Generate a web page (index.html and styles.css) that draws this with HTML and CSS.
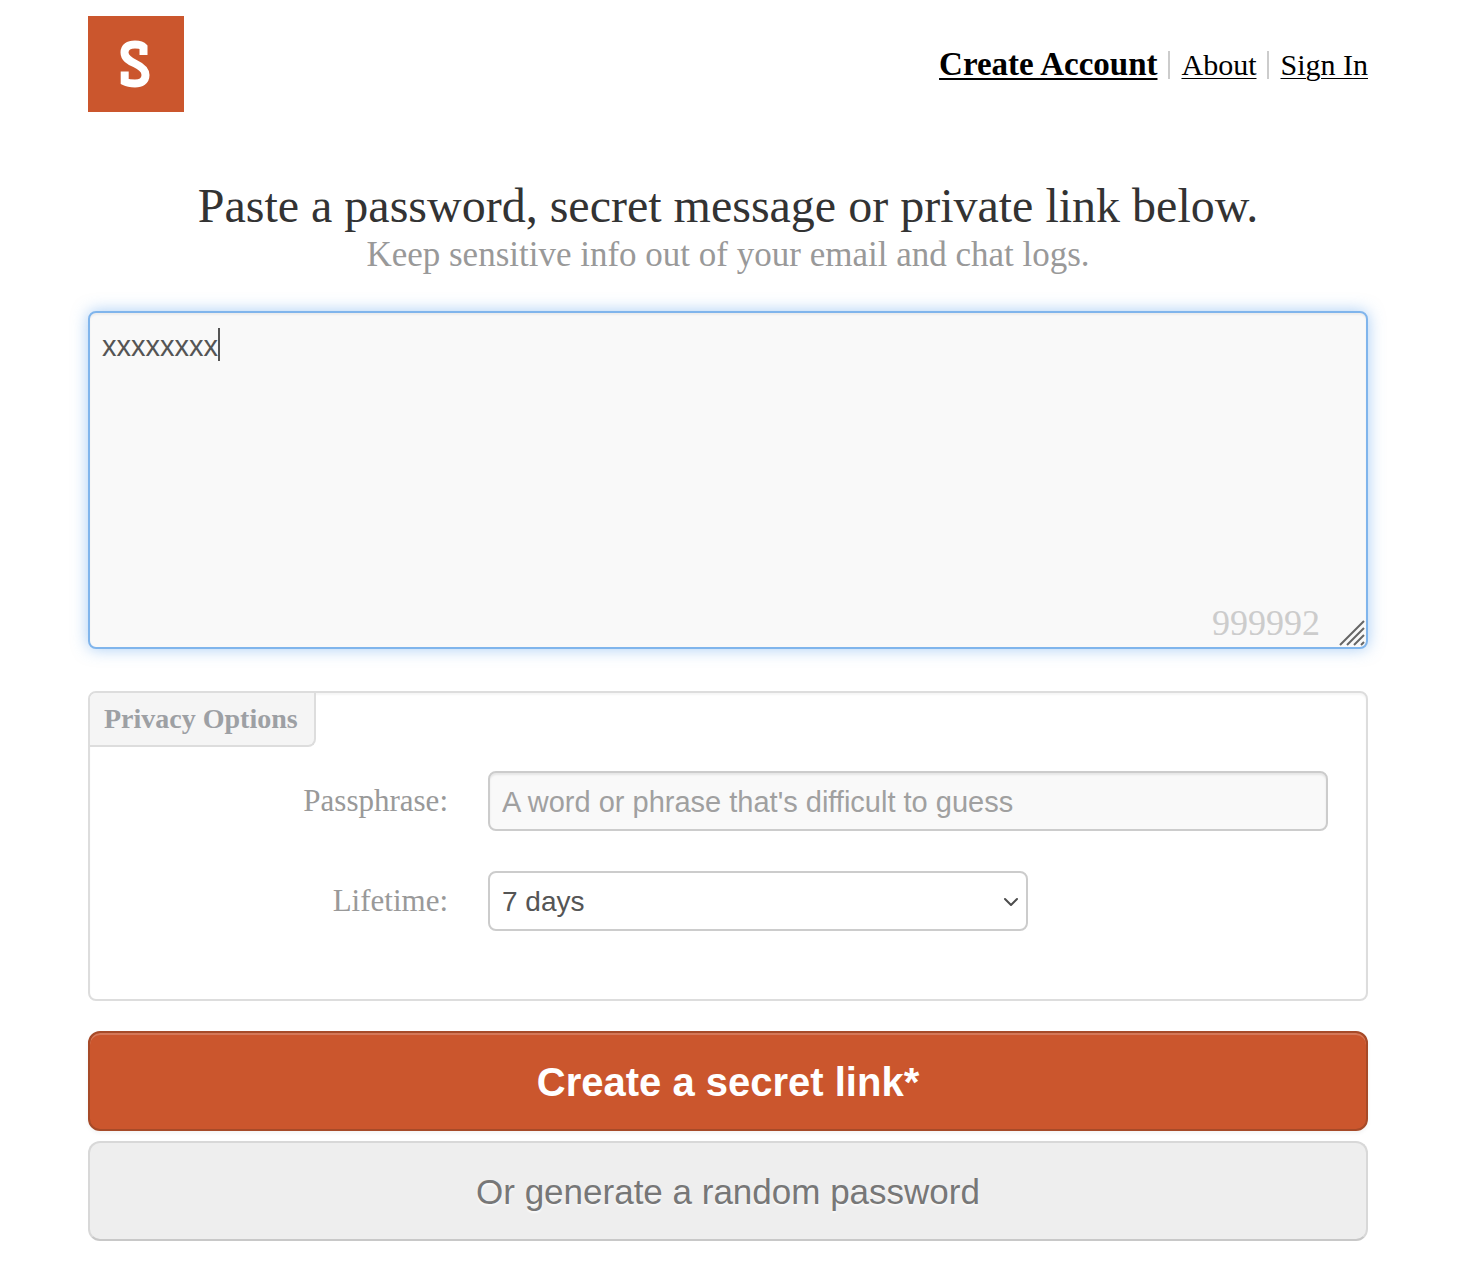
FILE: index.html
```html
<!DOCTYPE html>
<html lang="en">
<head>
<meta charset="utf-8">
<meta name="viewport" content="width=device-width, initial-scale=1">
<title>Share a secret</title>
<link rel="stylesheet" href="styles.css">
</head>
<body>
<div class="page">
  <header class="masthead">
    <a class="logo" href="#" aria-label="Home">
      <svg viewBox="0 0 96 96" aria-hidden="true"><path d="M55.500 39V31C53.500 28.700 50 28.500 47 28.500C40.500 28.500 36.500 31 36.500 36.500C36.500 42 41 44.700 47 47.500C53 50.300 57.500 53.500 57.500 59C57.500 65 53 67.500 47 67.500C43 67.500 39.500 67 36.700 65.500V55.500"/></svg>
    </a>
    <nav class="nav">
      <a class="strong" href="#">Create Account</a>
      <a href="#">About</a>
      <a href="#">Sign In</a>
    </nav>
  </header>
  <main>
    <h1>Paste a password, secret message or private link below.</h1>
    <p class="tagline">Keep sensitive info out of your email and chat logs.</p>
    <form>
      <div class="secret">
        <textarea class="secret-text" aria-label="Secret content">xxxxxxxx</textarea>
        <span class="caret"></span>
        <span class="counter">999992</span>
        <svg class="grip" viewBox="0 0 26 26" aria-hidden="true"><path d="M1 25L25 1M8 25L25 8M15 25L25 15M22 25L25 22"/></svg>
      </div>
      <section class="options">
        <h2>Privacy Options</h2>
        <div class="fields">
          <label for="passphrase">Passphrase:</label>
          <input class="control" id="passphrase" type="text" placeholder="A word or phrase that's difficult to guess">
          <label for="lifetime">Lifetime:</label>
          <div class="picker">
            <select class="control" id="lifetime"><option>7 days</option></select>
            <svg class="chevron" viewBox="0 0 16 10" aria-hidden="true"><path d="M2 2L8 8L14 2"/></svg>
          </div>
        </div>
      </section>
      <button class="btn primary" type="button">Create a secret link*</button>
      <button class="btn plain" type="button">Or generate a random password</button>
    </form>
  </main>
</div>
</body>
</html>
```
FILE: styles.css
```css
* { box-sizing: border-box; }
body {
  margin: 0;
  background: #fff;
  color: #333;
  font-family: Georgia, "Liberation Serif", serif;
}
.page { padding: 16px 98px 26px 88px; }
.masthead { display: flex; justify-content: space-between; align-items: center; }
.logo { width: 96px; height: 96px; background: #cb562d; }
.logo svg { display: block; width: 100%; height: 100%; }
.logo path { fill: none; stroke: #fff; stroke-width: 8; }
.nav { display: flex; align-items: baseline; font-size: 30px; line-height: 28px; }
.nav a {
  color: #000;
  text-decoration-thickness: 1px;
  text-underline-offset: 3px;
}
.nav a + a { margin-left: 11px; padding-left: 11px; border-left: 2px solid #ccc; }
.nav .strong { font-size: 33px; font-weight: bold; text-decoration-thickness: 2px; }
h1, h2, p { margin: 0; }
h1 {
  margin-top: 64px;
  font-size: 48px;
  line-height: 60px;
  font-weight: normal;
  text-align: center;
}
.tagline {
  font-size: 35px;
  line-height: 38px;
  color: #999;
  text-align: center;
}
.secret { position: relative; margin-top: 37px; }
.secret-text {
  display: block;
  width: 100%;
  height: 338px;
  padding: 15px 12px;
  border: 2px solid #80b5ec;
  border-radius: 8px;
  background: #f9f9f9;
  box-shadow: inset 0 2px 2px rgba(0,0,0,.05), 0 0 16px rgba(82,156,236,.5);
  color: #555;
  font: 29px/36px "Liberation Sans", Arial, sans-serif;
  resize: none;
  outline: none;
}
.caret { position: absolute; left: 130px; top: 17px; width: 2px; height: 33px; background: #555; }
.counter { position: absolute; right: 48px; bottom: 8px; font-size: 36px; line-height: 36px; color: #ccc; }
.grip { position: absolute; right: 3px; bottom: 3px; width: 26px; height: 26px; fill: none; stroke: #666; stroke-width: 2; }
.options {
  margin-top: 42px;
  padding-bottom: 68px;
  border: 2px solid #ddd;
  border-radius: 8px;
  box-shadow: inset 0 2px 2px rgba(0,0,0,.04);
}
h2 {
  width: fit-content;
  padding: 8px 16px 8px 14px;
  border: solid #ddd;
  border-width: 0 2px 2px 0;
  border-radius: 6px 0 8px 0;
  background: #f5f5f5;
  color: #9da0a4;
  font-size: 28px;
  line-height: 36px;
}
.fields {
  display: grid;
  grid-template-columns: 358px 1fr;
  gap: 40px;
  align-items: center;
  padding: 24px 38px 0 0;
  color: #999;
  font-size: 31px;
}
.fields label { text-align: right; }
.control {
  display: block;
  width: 100%;
  height: 60px;
  padding: 2px 12px 0;
  border: 2px solid #ccc;
  border-radius: 8px;
  color: #555;
  font: 28px/36px "Liberation Sans", Arial, sans-serif;
  appearance: none;
}
input.control { background: #f9f9f9; box-shadow: inset 0 2px 2px rgba(0,0,0,.08); font-size: 29px; }
input.control::placeholder { color: #a0a0a0; }
.picker { position: relative; max-width: 540px; }
select.control { background: #fff; }
.chevron { position: absolute; right: 9px; top: 26px; width: 16px; height: 10px; fill: none; stroke: #4d4d4d; stroke-width: 2; stroke-linecap: round; stroke-linejoin: round; }
.btn {
  display: block;
  width: 100%;
  height: 100px;
  padding: 2px 0 0;
  border-radius: 12px;
  font-family: "Liberation Sans", Arial, sans-serif;
}
.primary {
  margin-top: 30px;
  border: 2px solid #a64a28;
  background: #cb562d;
  box-shadow: inset 0 2px 0 rgba(255,255,255,.2), 0 2px 4px rgba(0,0,0,.05);
  color: #fff;
  font-size: 40px;
  font-weight: bold;
}
.plain {
  margin-top: 10px;
  border: 2px solid #d8d8d8;
  border-bottom-color: #c8c8c8;
  background: #eee;
  color: #777;
  font-size: 35px;
  text-shadow: 0 2px 2px rgba(255,255,255,.75);
}
```
